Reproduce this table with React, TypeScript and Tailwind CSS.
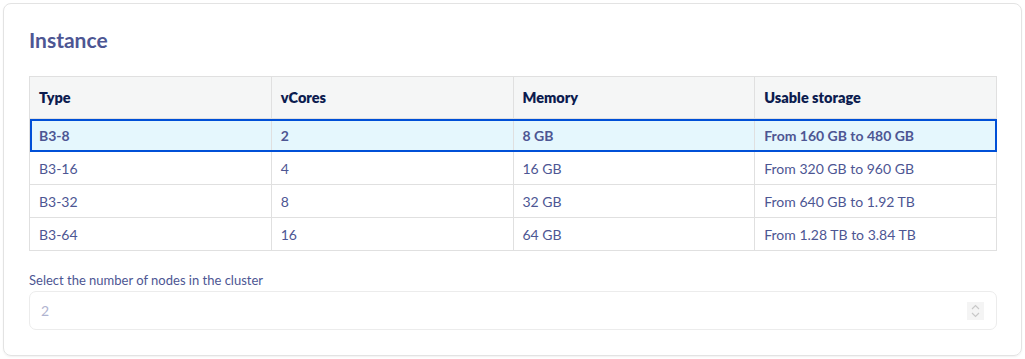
import React from "react";

const rows = [
  ["B3-8", "2", "8 GB", "From 160 GB to 480 GB"],
  ["B3-16", "4", "16 GB", "From 320 GB to 960 GB"],
  ["B3-32", "8", "32 GB", "From 640 GB to 1.92 TB"],
  ["B3-64", "16", "64 GB", "From 1.28 TB to 3.84 TB"],
];

export default function App() {
  return (
    <div className="bg-white w-[1025px] h-[359px] p-[3px]" style={{ fontFamily: "Lato, 'Open Sans', sans-serif" }}>
      <div className="border border-[#e3e3e3] rounded-[8px] pl-[25px] pr-[24px] pt-[22px] pb-[24px] h-[353px] shadow-[0_1px_2px_rgba(0,0,0,0.06)]">
        <h2 className="text-[21px] font-bold text-[#4d5693] leading-[28px] mb-[22px]">Instance</h2>
        <table className="w-full table-fixed border-collapse text-[14px]">
          <thead>
            <tr className="bg-[#f5f6f6] h-[42px]">
              {["Type", "vCores", "Memory", "Usable storage"].map((h) => (
                <th key={h} className="border border-[#e0e0e0] text-left px-[9px] text-[14.5px] font-extrabold text-[#0c1c4f]">{h}</th>
              ))}
            </tr>
          </thead>
          <tbody>
            {rows.map((r, i) => (
              <tr
                key={i}
                className={
                  i === 0
                    ? "h-[33px] bg-[#e5f7fd] outline outline-2 outline-[#0050d7] -outline-offset-2 font-bold"
                    : "h-[33px]"
                }
              >
                {r.map((c, j) => (
                  <td key={j} className="border border-[#e0e0e0] px-[9px] text-[#4d5693]">{c}</td>
                ))}
              </tr>
            ))}
          </tbody>
        </table>
        <div className="mt-[20px] text-[13px] text-[#4d5693] leading-[18px]">Select the number of nodes in the cluster</div>
        <div className="mt-[2px] h-[39px] border border-[#ececec] rounded-[7px] flex items-center justify-between pl-[11px] pr-[12px]">
          <span className="text-[14px] text-[#b0b4d0]">2</span>
          <div className="w-[17px] h-[18px] bg-[#f4f4f4] flex items-center justify-center">
            <svg width="9" height="14" viewBox="0 0 9 14" fill="none" stroke="#c8c8c8" strokeWidth="1.2">
              <path d="M1 5 L4.5 1.5 L8 5" />
              <path d="M1 9 L4.5 12.5 L8 9" />
            </svg>
          </div>
        </div>
      </div>
    </div>
  );
}
